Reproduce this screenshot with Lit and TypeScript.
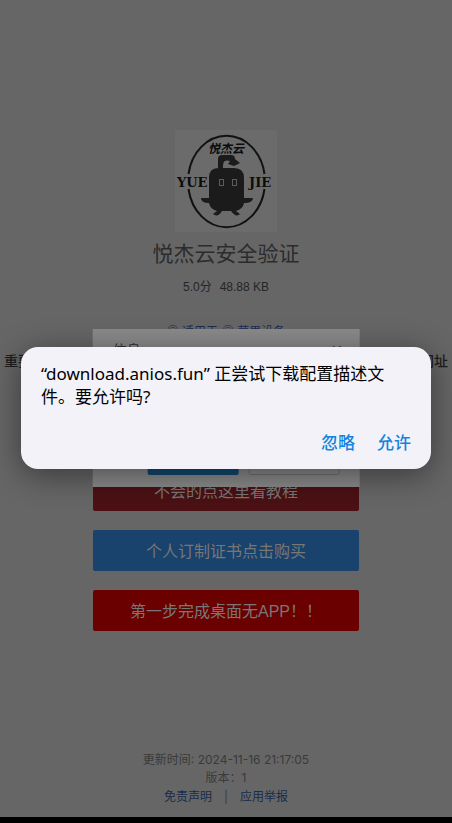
import { LitElement, html, css, svg } from "lit";
import { customElement } from "lit/decorators.js";

@customElement("brand-logo")
class BrandLogo extends LitElement {
  static styles = css`
    :host { display: block; width: 102px; height: 102px; background: #6b6b6b; }
    svg { display: block; }
    .arc { fill: none; stroke: #111; stroke-width: 2; }
    .body { fill: #1b1b1b; }
    .eye { fill: none; stroke: #5c5c5c; stroke-width: 1; }
    .latin { font: bold 13px "DejaVu Serif", serif; fill: #0c0c0c; }
    .han { font: italic bold 12px "Noto Sans CJK SC", sans-serif; fill: #0c0c0c; }
  `;
  render() {
    return html`<svg width="102" height="102" viewBox="0 0 102 102" role="img" aria-label="YUE JIE">
      ${svg`
      <path class="arc" d="M13.500 44A38.500 45.500 0 0 1 89.500 44"/>
      <path class="arc" d="M13.500 59A38.500 45.500 0 0 0 89.500 59"/>
      <text class="han" x="33" y="23">悦杰云</text>
      <path class="body" d="M43 40V29Q43 25 47 25H56Q60 25 60 29L65 33L59 36L53 34L55 31Q48 29 48 36V38H59Q69 38 69 48V68H78Q78 73 69 73Q68 79 61 81L65 84Q61 88 56 81H47Q43 88 38 84L42 81Q35 79 34 73Q26 73 26 68H34V48Q34 38 43 38Z"/>
      <rect class="eye" x="44.500" y="49.500" width="4" height="6"/>
      <rect class="eye" x="57.500" y="49.500" width="4" height="6"/>
      <text class="latin" x="2" y="57">YUE</text>
      <text class="latin" x="74" y="57">JIE</text>`}
    </svg>`;
  }
}

@customElement("app-root")
class AppRoot extends LitElement {
  static styles = css`
    :host {
      display: block; position: relative; min-height: 100vh; overflow: hidden;
      box-sizing: border-box; border-bottom: 6px solid #000;
      background: #666; color: #292929;
      font-family: "Liberation Sans", "Noto Sans CJK SC", sans-serif;
    }
    button { border: 0; margin: 0; padding: 0; font: inherit; color: inherit; background: none; }
    a { color: #182c4a; text-decoration: none; }
    h1, p { margin: 0; font-weight: 400; }
    .page { display: flex; flex-direction: column; align-items: center; padding-top: 130px; }
    h1 { font-size: 21px; line-height: 30px; margin-top: 7px; color: #2c2c2c; }
    .meta { display: flex; gap: 8px; font-size: 12px; line-height: 20px; margin-top: 8px; color: #252525; }
    .devices { display: flex; gap: 4px; font-size: 12px; line-height: 20px; margin-top: 25px; color: #1c2c50; }
    .notice { align-self: stretch; display: flex; justify-content: space-between; padding: 0 4px; font-size: 14px; font-weight: 500; line-height: 20px; margin-top: 9px; color: #1d1d1d; }
    .actions { display: flex; flex-direction: column; gap: 19px; width: 59%; margin-top: 99px; }
    .action { height: 41px; padding-bottom: 2px; border-radius: 2px; font-size: 16px; color: #777; }
    .tutorial { background: #4b1114; }
    .buy { background: #19426c; }
    .step { background: #6b0000; }
    footer { display: flex; flex-direction: column; align-items: center; margin-top: 120px; font-family: Inter, "Noto Sans CJK SC", sans-serif; font-size: 12px; line-height: 18px; color: #3a3a3a; }
    .links { display: flex; gap: 12px; line-height: 20px; }
    .info {
      position: absolute; top: 329px; left: 50%; transform: translateX(-50%); width: 59%; height: 158px; box-sizing: border-box;
      display: flex; flex-direction: column; justify-content: space-between;
      background: #8a8a8a; color: #303030;
    }
    .info-head { display: flex; justify-content: space-between; padding: 11px 16px 0 20px; font-size: 14px; line-height: 20px; }
    .info-foot { display: flex; justify-content: flex-end; gap: 10px; padding: 0 20px 12px 0; }
    .choice { width: 91px; height: 30px; border-radius: 2px; box-sizing: border-box; font-size: 14px; }
    .primary { background: #12486f; color: #888; }
    .plain { border: 1px solid #707070; }
    .alert {
      position: absolute; top: 347px; left: 21px; right: 21px; height: 122px; box-sizing: border-box;
      display: flex; flex-direction: column; justify-content: space-between;
      padding: 15px 20px 13px; border-radius: 17px; background: #f2f2f8; color: #000;
      box-shadow: 0 6px 32px rgb(0 0 0 / 45%);
    }
    .question { font: 400 17px/23px "Noto Sans", "Noto Sans CJK SC", sans-serif; }
    .answers { display: flex; justify-content: flex-end; gap: 22px; }
    .answer { font-size: 17px; line-height: 24px; font-weight: 500; color: #1484e0; }
  `;
  render() {
    return html`
      <main class="page">
        <brand-logo></brand-logo>
        <h1>悦杰云安全验证</h1>
        <div class="meta"><span>5.0分</span><span>48.88 KB</span></div>
        <div class="devices"><span>◎ 适用于</span><span>◎ 苹果设备</span></div>
        <div class="notice"><span>重要</span><span>网址</span></div>
        <div class="actions">
          <button class="action tutorial">不会的点这里看教程</button>
          <button class="action buy">个人订制证书点击购买</button>
          <button class="action step">第一步完成桌面无APP！！</button>
        </div>
        <footer>
          <span>更新时间: 2024-11-16 21:17:05</span>
          <span>版本：1</span>
          <div class="links"><a href="#disclaimer">免责声明</a><span>|</span><a href="#report">应用举报</a></div>
        </footer>
      </main>
      <section class="info">
        <div class="info-head"><span>信息</span><span>✕</span></div>
        <div class="info-foot"><button class="choice primary" aria-label="确定"></button><button class="choice plain" aria-label="取消"></button></div>
      </section>
      <section class="alert" role="alertdialog" aria-labelledby="question">
        <p class="question" id="question">“download.anios.fun” 正尝试下载配置描述文件。要允许吗?</p>
        <div class="answers"><button class="answer">忽略</button><button class="answer">允许</button></div>
      </section>
    `;
  }
}
